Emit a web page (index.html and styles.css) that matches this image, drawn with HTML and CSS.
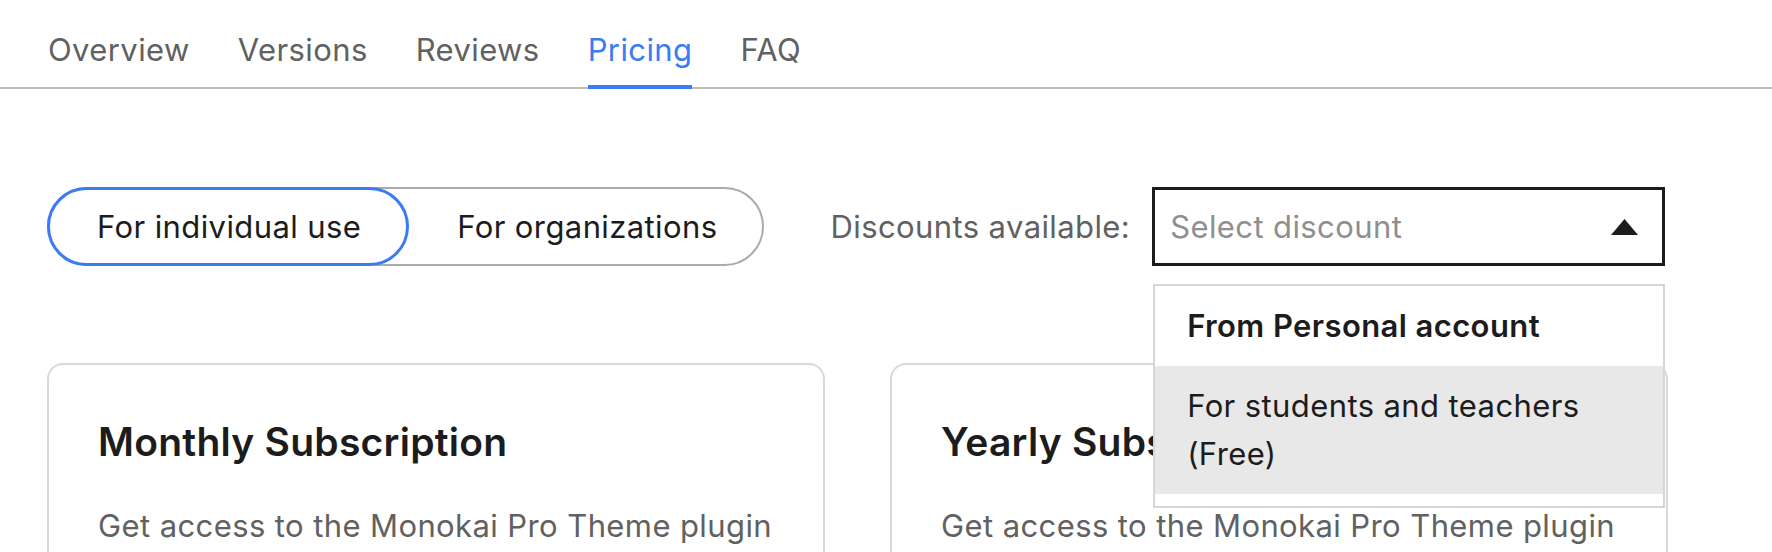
FILE: index.html
```html
<!DOCTYPE html>
<html lang="en">
<head>
<meta charset="utf-8">
<title>Pricing</title>
<link rel="stylesheet" href="styles.css">
</head>
<body>
<nav class="tabs">
  <a class="tab" href="#">Overview</a>
  <a class="tab" href="#">Versions</a>
  <a class="tab" href="#">Reviews</a>
  <a class="tab active" href="#">Pricing</a>
  <a class="tab" href="#">FAQ</a>
</nav>
<main class="content">
  <div class="controls">
    <div class="toggle">
      <button class="seg active">For individual use</button>
      <button class="seg">For organizations</button>
    </div>
    <div class="discounts">
      <span class="disc-label">Discounts available:</span>
      <div class="select-wrap">
        <div class="select">
          <span class="placeholder">Select discount</span>
          <svg class="caret" width="27" height="16" viewBox="0 0 27 16"><path d="M13.5 0 L27 16 L0 16 Z" fill="#1c1c1c"/></svg>
        </div>
        <ul class="menu">
          <li class="menu-head">From Personal account</li>
          <li class="menu-item hover">For students and teachers (Free)</li>
        </ul>
      </div>
    </div>
  </div>
  <div class="cards">
    <section class="card">
      <h2 class="card-title">Monthly Subscription</h2>
      <p class="card-desc">Get access to the Monokai Pro Theme plugin</p>
    </section>
    <section class="card">
      <h2 class="card-title">Yearly Subscription</h2>
      <p class="card-desc">Get access to the Monokai Pro Theme plugin</p>
    </section>
  </div>
</main>
</body>
</html>
```
FILE: styles.css
```css
html, body {
  margin: 0;
  padding: 0;
  height: 552px;
  overflow: hidden;
  background: #ffffff;
  font-family: "Inter", "Noto Sans", "Liberation Sans", sans-serif;
  color: #1c1c1c;
  letter-spacing: 0.4px;
}

.tabs {
  display: flex;
  gap: 48px;
  padding-left: 48px;
  border-bottom: 2px solid #bdbdbd;
}

.tab {
  display: block;
  padding: 32px 0 17px;
  margin-bottom: -2px;
  font-size: 31px;
  line-height: 36px;
  color: #616161;
  text-decoration: none;
  border-bottom: 4px solid transparent;
}

.tab.active {
  color: #3b7cf2;
  border-bottom-color: #3b7cf2;
}

.content {
  padding: 98px 0 0 47px;
}

.controls {
  display: flex;
  align-items: center;
}

.toggle {
  display: flex;
  height: 79px;
  box-sizing: border-box;
  border: 2px solid #ababab;
  border-radius: 40px;
}

.seg {
  font-family: inherit;
  font-size: 31px;
  letter-spacing: 0.4px;
  color: #1c1c1c;
  background: transparent;
  border: 3px solid transparent;
  border-radius: 40px;
  padding: 0 41px 0 45px;
  margin: -2px 0;
  height: 79px;
  box-sizing: border-box;
  cursor: pointer;
}

.seg.active {
  border-color: #3b7cf2;
  margin-left: -2px;
  padding: 0 45px 0 47px;
  background: #ffffff;
}

.discounts {
  display: flex;
  align-items: center;
  margin-left: 67px;
}

.disc-label {
  font-size: 31px;
  color: #616161;
}

.select-wrap {
  position: relative;
  margin-left: 22px;
}

.select {
  width: 513px;
  height: 79px;
  box-sizing: border-box;
  border: 3px solid #1c1c1c;
  display: flex;
  align-items: center;
  justify-content: space-between;
  padding: 0 24px 0 15px;
}

.placeholder {
  font-size: 31px;
  color: #8f8f8f;
}

.caret {
  display: block;
}

.menu {
  position: absolute;
  top: 97px;
  left: 1px;
  width: 512px;
  box-sizing: border-box;
  margin: 0;
  padding: 0 0 12px;
  list-style: none;
  background: #ffffff;
  border: 2px solid #d6d6d6;
  z-index: 10;
}

.menu li {
  font-size: 31px;
  line-height: 48px;
  padding: 16px 50px 16px 32px;
  color: #1c1c1c;
}

.menu-head {
  font-weight: 600;
}

.menu-item.hover {
  background: #e8e8e8;
}

.cards {
  display: grid;
  grid-template-columns: 778px 778px;
  column-gap: 65px;
  margin-top: 97px;
}

.card {
  border: 2px solid #d9d9d9;
  border-radius: 16px;
  padding: 53px 49px 0;
  height: 400px;
  box-sizing: border-box;
}

.card-title {
  margin: 0;
  font-size: 39px;
  line-height: 48px;
  font-weight: 600;
  letter-spacing: 0.25px;
  color: #1c1c1c;
}

.card-desc {
  margin: 38px 0 0;
  font-size: 31px;
  line-height: 44px;
  color: #616161;
}
```
